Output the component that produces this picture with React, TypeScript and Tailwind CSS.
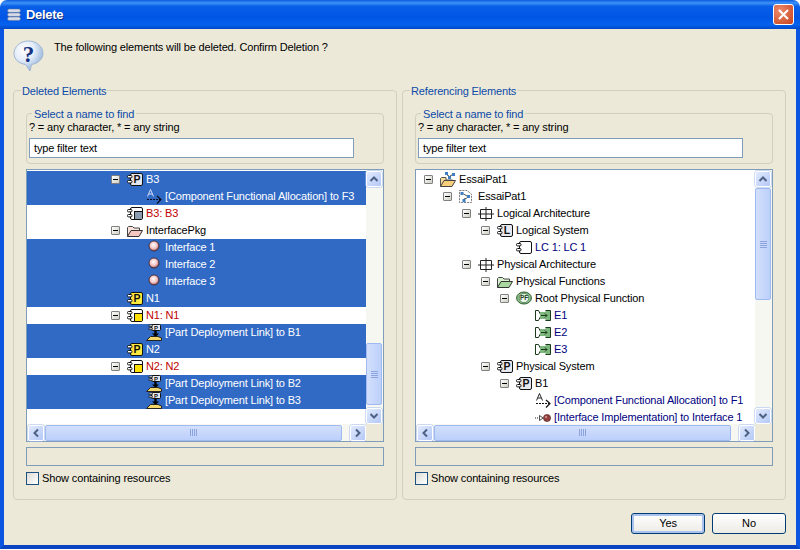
import React from "react";

type Row = {
  level: number;
  text: string;
  icon: React.ReactNode;
  exp?: boolean;
  sel?: boolean;
  color?: string;
};

const svgText = { fontFamily: "Liberation Sans, sans-serif" };

function Expander() {
  return (
    <div className="flex h-[9px] w-[9px] items-center justify-center rounded-[1px] border border-[#808080] bg-[linear-gradient(135deg,#ffffff,#cfcfc4)]">
      <div className="h-px w-[5px] bg-black" />
    </div>
  );
}

function Comp({ letter, fill = "#fff", corner }: { letter?: string; fill?: string; corner?: string }) {
  return (
    <svg width="16" height="16" viewBox="0 0 16 16">
      <rect x="3.5" y="1.5" width="12" height="12" rx="1.5" fill={fill} stroke="#111" />
      {corner && <rect x="8" y="6" width="7" height="7" fill={corner} />}
      {corner && <path d="M7 5.5H15M7.5 5.5V13" stroke="#111" />}
      <rect x="0.5" y="3.5" width="4.5" height="2.4" rx="1" fill="#fff" stroke="#111" />
      <rect x="0.5" y="8.5" width="4.5" height="2.4" rx="1" fill="#fff" stroke="#111" />
      {letter && (
        <text x="10" y="11.4" fontSize="10.5" fontWeight="bold" textAnchor="middle" fill="#111" style={svgText}>
          {letter}
        </text>
      )}
    </svg>
  );
}

function Folder({ fill, tab }: { fill: string; tab: string }) {
  return (
    <svg width="16" height="16" viewBox="0 0 16 16">
      <path d="M0.5 13.5V4.5L1.5 3.5H5.5L7 5H12.5V7" fill={tab} stroke="#444" />
      <path d="M0.5 13.5L4 7.5H15.5L12 13.5Z" fill={fill} stroke="#333" />
    </svg>
  );
}

function ProjectFolder() {
  return (
    <svg width="16" height="16" viewBox="0 0 16 16">
      <path d="M0.5 14.5V6.5L1.5 5.5H6V8H12.5" fill="#f7dc9c" stroke="#555" />
      <path d="M0.5 14.5L4 8.5H15.5L12 14.5Z" fill="#f5cf7a" stroke="#444" />
      <rect x="5" y="0" width="3" height="3" fill="#3d7fc4" />
      <rect x="12" y="1" width="3" height="3" fill="#3d7fc4" />
      <rect x="8" y="4" width="3" height="3" fill="#3d7fc4" />
      <path d="M7 3L9 4M10 4L12 3" stroke="#555" />
    </svg>
  );
}

function ModelFile() {
  return (
    <svg width="14" height="15" viewBox="0 0 14 15">
      <path d="M0.5 1.5H8L12.5 5V13.5H0.5Z" fill="#fff" stroke="#777" strokeDasharray="2 1" />
      <rect x="1.5" y="3" width="3" height="3" fill="#3d7fc4" />
      <rect x="8" y="6" width="3" height="3" fill="#3d7fc4" />
      <rect x="3.5" y="10" width="3" height="3" fill="#3d7fc4" />
      <path d="M4.5 5L8 7M5 10L8 9" stroke="#555" />
    </svg>
  );
}

function Arch() {
  return (
    <svg width="16" height="16" viewBox="0 0 16 16">
      <path d="M2.5 3.5H13.5V12.5H2.5ZM8 1V15M0 8H16" fill="none" stroke="#222" />
    </svg>
  );
}

function Sphere({ id }: { id: string }) {
  return (
    <svg width="16" height="16" viewBox="0 0 16 16">
      <defs>
        <radialGradient id={id} cx="0.45" cy="0.4" r="0.65">
          <stop offset="0" stopColor="#ffffff" />
          <stop offset="0.55" stopColor="#f0c2c4" />
          <stop offset="1" stopColor="#8a3a3c" />
        </radialGradient>
      </defs>
      <circle cx="8" cy="6" r="5" fill={`url(#${id})`} stroke="#3a2020" strokeWidth="0.8" />
    </svg>
  );
}

function Alloc({ dark }: { dark?: boolean }) {
  const c = dark ? "#0a0a20" : "#111";
  return (
    <svg width="16" height="16" viewBox="0 0 16 16" className="overflow-visible">
      <path d="M1.5 7.5L4.5 0.5L7.5 7.5M2.8 5H6.2" fill="none" stroke={dark ? "#e8e8ff" : c} strokeWidth="0.9" />
      <path d="M1 10.5H14" stroke={c} strokeDasharray="2 1" />
      <path d="M11 7L15 10.5L11 14.5" fill="none" stroke={c} strokeWidth="1.2" />
    </svg>
  );
}

function Deploy() {
  return (
    <svg width="16" height="16" viewBox="0 0 16 16" className="overflow-visible">
      <rect x="5.5" y="-0.5" width="9" height="6" rx="1" fill="#e6e8f0" stroke="#111" />
      <rect x="3" y="0" width="3.5" height="1.6" fill="#fff" stroke="#111" strokeWidth="0.7" />
      <rect x="3" y="3" width="3.5" height="1.6" fill="#fff" stroke="#111" strokeWidth="0.7" />
      <text x="10" y="5" fontSize="6" fontWeight="bold" textAnchor="middle" fill="#111" style={svgText}>P</text>
      <path d="M9.5 6V10" stroke="#000" strokeWidth="2.4" />
      <path d="M9.5 12L6 8.5H13Z" fill="#000" />
      <path d="M0.5 15.5L4.5 11.5H9L12 11.5L15.5 13V15.5Z" fill="#f2d86a" stroke="#222" />
    </svg>
  );
}

function PF() {
  return (
    <svg width="16" height="16" viewBox="0 0 16 16">
      <ellipse cx="8" cy="7" rx="7.4" ry="6" fill="#8fc38f" stroke="#2c5a2c" />
      <ellipse cx="8" cy="7" rx="4.8" ry="4.6" fill="#eaf5ea" stroke="#2c5a2c" strokeWidth="0.6" />
      <text x="8" y="9.4" fontSize="6.5" fontWeight="bold" textAnchor="middle" fill="#224422" style={svgText}>PF</text>
    </svg>
  );
}

function Exch() {
  return (
    <svg width="16" height="16" viewBox="0 0 16 16">
      <path d="M0.5 2.5H3.5L6 7.5L3.5 12.5H0.5Z" fill="#fff" stroke="#1c3a1c" />
      <rect x="5" y="4" width="7" height="7" fill="#7db77d" />
      <path d="M10.5 2.5H15.5V12.5H10.5" fill="#7db77d" stroke="#1c3a1c" />
      <path d="M6 7.5H12M10 5.5L12 7.5L10 9.5" fill="none" stroke="#1c3a1c" />
    </svg>
  );
}

function Impl() {
  return (
    <svg width="16" height="16" viewBox="0 0 16 16">
      <path d="M0 8H4" stroke="#222" strokeDasharray="1 1" />
      <path d="M4.5 5.5L8 8L4.5 10.5Z" fill="#fff" stroke="#222" strokeWidth="0.8" />
      <circle cx="12" cy="8" r="3.6" fill="#94403f" stroke="#4a2020" strokeWidth="0.6" />
      <circle cx="11" cy="7" r="1" fill="#d8a0a0" />
    </svg>
  );
}

const leftRows: Row[] = [
  { level: 4, text: "B3", exp: true, sel: true, icon: <Comp letter="P" fill="#e6e8f0" /> },
  { level: 5, text: "[Component Functional Allocation] to F3", sel: true, icon: <Alloc dark /> },
  { level: 4, text: "B3: B3", color: "text-[#c00000]", icon: <Comp fill="#fff" corner="#8c9cb0" /> },
  { level: 4, text: "InterfacePkg", exp: true, icon: <Folder fill="#f4c8c0" tab="#fbe4dc" /> },
  { level: 5, text: "Interface 1", sel: true, icon: <Sphere id="s1" /> },
  { level: 5, text: "Interface 2", sel: true, icon: <Sphere id="s2" /> },
  { level: 5, text: "Interface 3", sel: true, icon: <Sphere id="s3" /> },
  { level: 4, text: "N1", sel: true, icon: <Comp letter="P" fill="#ffe93c" /> },
  { level: 4, text: "N1: N1", exp: true, color: "text-[#c00000]", icon: <Comp fill="#fff" corner="#ffe000" /> },
  { level: 5, text: "[Part Deployment Link] to B1", sel: true, icon: <Deploy /> },
  { level: 4, text: "N2", sel: true, icon: <Comp letter="P" fill="#ffe93c" /> },
  { level: 4, text: "N2: N2", exp: true, color: "text-[#c00000]", icon: <Comp fill="#fff" corner="#ffe000" /> },
  { level: 5, text: "[Part Deployment Link] to B2", sel: true, icon: <Deploy /> },
  { level: 5, text: "[Part Deployment Link] to B3", sel: true, icon: <Deploy /> },
];

const blue = "text-[#000080]";

const rightRows: Row[] = [
  { level: 0, text: "EssaiPat1", exp: true, icon: <ProjectFolder /> },
  { level: 1, text: "EssaiPat1", exp: true, icon: <ModelFile /> },
  { level: 2, text: "Logical Architecture", exp: true, icon: <Arch /> },
  { level: 3, text: "Logical System", exp: true, icon: <Comp letter="L" fill="#e6e8f0" /> },
  { level: 4, text: "LC 1: LC 1", color: blue, icon: <Comp /> },
  { level: 2, text: "Physical Architecture", exp: true, icon: <Arch /> },
  { level: 3, text: "Physical Functions", exp: true, icon: <Folder fill="#a8d8a0" tab="#d8f0d0" /> },
  { level: 4, text: "Root Physical Function", exp: true, icon: <PF /> },
  { level: 5, text: "E1", color: blue, icon: <Exch /> },
  { level: 5, text: "E2", color: blue, icon: <Exch /> },
  { level: 5, text: "E3", color: blue, icon: <Exch /> },
  { level: 3, text: "Physical System", exp: true, icon: <Comp letter="P" fill="#e6e8f0" /> },
  { level: 4, text: "B1", exp: true, icon: <Comp letter="P" fill="#e6e8f0" /> },
  { level: 5, text: "[Component Functional Allocation] to F1", color: blue, icon: <Alloc /> },
  { level: 5, text: "[Interface Implementation] to Interface 1", color: blue, icon: <Impl /> },
];

function Arrow({ dir }: { dir: "up" | "down" | "left" | "right" }) {
  const d = {
    up: "M2.5 8L6 4.5L9.5 8",
    down: "M2.5 4L6 7.5L9.5 4",
    left: "M8 2.5L4.5 6L8 9.5",
    right: "M4 2.5L7.5 6L4 9.5",
  }[dir];
  return (
    <div className="flex h-[16px] w-[16px] shrink-0 items-center justify-center rounded-[2px] border border-white bg-[linear-gradient(135deg,#e1eafe,#b4c8f6)] shadow-[0_0_0_0.5px_#9ebaf0]">
      <svg width="12" height="12" viewBox="0 0 12 12">
        <path d={d} fill="none" stroke="#4d6185" strokeWidth="2" />
      </svg>
    </div>
  );
}

function VScroll({ before, thumb }: { before: number; thumb: number }) {
  return (
    <div className="flex w-[17px] shrink-0 flex-col bg-[#f7f7f2] pt-px">
      <Arrow dir="up" />
      <div className="flex-1">
        <div style={{ height: before }} />
        <div
          className="flex w-[16px] items-center justify-center rounded-[2px] border border-[#9ebaf0] bg-[linear-gradient(to_right,#d3dffc,#bcd0fa)]"
          style={{ height: thumb }}
        >
          <div className="flex flex-col gap-px">
            {[0, 1, 2, 3].map((i) => (
              <div key={i} className="h-px w-[7px] bg-[#8ba4de]" />
            ))}
          </div>
        </div>
      </div>
      <Arrow dir="down" />
    </div>
  );
}

function HScroll() {
  return (
    <div className="flex h-[17px] shrink-0 bg-[#f7f7f2]">
      <div className="flex w-[339px] items-center pl-px">
        <Arrow dir="left" />
        <div className="mx-px flex h-[16px] w-[297px] items-center justify-center rounded-[2px] border border-[#9ebaf0] bg-[linear-gradient(to_bottom,#d3dffc,#bcd0fa)]">
          <div className="flex gap-px">
            {[0, 1, 2, 3].map((i) => (
              <div key={i} className="h-[7px] w-px bg-[#8ba4de]" />
            ))}
          </div>
        </div>
        <div className="flex-1" />
        <Arrow dir="right" />
      </div>
      <div className="flex-1 bg-[#ece9d8]" />
    </div>
  );
}

function TreeRow({ row }: { row: Row }) {
  return (
    <div
      className={`flex h-[17px] shrink-0 items-center overflow-hidden whitespace-nowrap ${row.sel ? "bg-[#316ac5] text-white" : row.color ?? "text-black"}`}
      style={{ paddingLeft: 8 + row.level * 19 }}
    >
      <div className="flex w-[16px] shrink-0 items-center">{row.exp && <Expander />}</div>
      <div className="flex h-[16px] w-[19px] shrink-0 items-center">{row.icon}</div>
      <span>{row.text}</span>
    </div>
  );
}

function Panel({ title, rows, before, thumb }: { title: string; rows: Row[]; before: number; thumb: number }) {
  return (
    <fieldset className="min-w-0 w-[384px] rounded-[4px] border border-[#d0d0bf] px-[12px] pb-[14px]">
      <legend className="ml-[-5px] h-[15px] px-px leading-[17px] text-[#0b4aa8]">{title}</legend>
      <fieldset className="mt-[9px] h-[57px] rounded-[4px] border border-[#d0d0bf] px-[2px]">
        <legend className="ml-[3px] h-[13px] px-[2px] leading-[15px] text-[#0b4aa8]">Select a name to find</legend>
        <div className="h-[14px] leading-[14px] text-black">? = any character, * = any string</div>
        <div className="mt-[4px] h-[20px] w-[325px] border border-[#7f9db9] bg-white px-[4px] leading-[18px] text-black">
          type filter text
        </div>
      </fieldset>
      <div className="mt-[5px] flex h-[273px] flex-col border border-[#7f9db9] bg-white">
        <div className="flex min-h-0 flex-1">
          <div className="flex w-[339px] flex-col overflow-hidden pt-px">
            {rows.map((row, i) => (
              <TreeRow key={i} row={row} />
            ))}
          </div>
          <VScroll before={before} thumb={thumb} />
        </div>
        <HScroll />
      </div>
      <div className="mt-[5px] h-[19px] border border-[#7f9db9]" />
      <div className="mt-[6px] flex h-[13px] items-center gap-[3px]">
        <div className="h-[13px] w-[13px] border border-[#1c5180] bg-[linear-gradient(135deg,#dcdcd7,#ffffff)]" />
        <span className="text-black">Show containing resources</span>
      </div>
    </fieldset>
  );
}

export default function App() {
  return (
    <div className="flex h-[549px] w-[800px] flex-col overflow-hidden rounded-t-[7px] bg-white font-['Liberation_Sans',sans-serif] text-[11px] tracking-[-0.15px]">
      {/* Title bar */}
      <div className="flex h-[29px] shrink-0 items-center justify-between bg-[linear-gradient(to_bottom,#0a5be0_0%,#3d92f7_10%,#0a5fe8_22%,#0055e5_60%,#0562ee_85%,#0048c8_100%)] pl-[7px] pr-[6px]">
        <div className="flex items-center gap-[5px]">
          <svg width="14" height="14" viewBox="0 0 14 14">
            {[1, 5, 9].map((y) => (
              <rect key={y} x="0.5" y={y} width="13" height="3.4" rx="1.7" fill="#d6dce8" stroke="#5a6c90" strokeWidth="0.5" />
            ))}
          </svg>
          <span className="text-[13px] font-bold tracking-[-0.3px] text-white [text-shadow:1px_1px_#0a2a80]">Delete</span>
        </div>
        <div className="flex h-[21px] w-[21px] items-center justify-center rounded-[3px] border border-white bg-[radial-gradient(circle_at_30%_30%,#ec8a6c,#c8421c)]">
          <svg width="13" height="13" viewBox="0 0 13 13">
            <path d="M2 2L11 11M11 2L2 11" stroke="#fff" strokeWidth="2" />
          </svg>
        </div>
      </div>

      {/* Dialog body */}
      <div className="flex min-h-0 flex-1 flex-col border-x-4 border-b-4 border-x-[#0b55e0] border-b-[#0a44c0] bg-[#ece9d8] pl-[9px] pr-[10px]">
        <div className="flex h-[54px] shrink-0 pt-[11px]">
          <svg width="32" height="32" viewBox="0 0 32 32">
            <defs>
              <radialGradient id="bubble" cx="0.35" cy="0.3" r="0.8">
                <stop offset="0" stopColor="#ffffff" />
                <stop offset="0.45" stopColor="#e2ecf8" />
                <stop offset="0.85" stopColor="#9db8dc" />
                <stop offset="1" stopColor="#7a98c4" />
              </radialGradient>
            </defs>
            <path
              d="M15.5 1C7.5 1 1 6.5 1 13.5C1 19 5.5 23.5 12.5 24.5L17 31L18.5 24.5C25 23.5 30 19 30 13.5C30 6.5 23.5 1 15.5 1Z"
              fill="url(#bubble)"
              stroke="#9fb6d4"
            />
            <text x="15.5" y="21.5" fontSize="23" fontWeight="bold" textAnchor="middle" fill="#16327f" style={{ fontFamily: "Liberation Serif, serif" }}>
              ?
            </text>
          </svg>
          <span className="ml-[9px] mt-[-1px] text-black">The following elements will be deleted. Confirm Deletion ?</span>
        </div>

        <div className="flex justify-between">
          <Panel title="Deleted Elements" rows={leftRows} before={156} thumb={62} />
          <Panel title="Referencing Elements" rows={rightRows} before={1} thumb={112} />
        </div>

        <div className="mt-[13px] flex justify-end gap-[7px]">
          <button className="h-[21px] w-[74px] rounded-[3px] border border-[#003c74] bg-[linear-gradient(to_bottom,#ffffff,#ecebe5)] text-black shadow-[inset_0_0_0_2px_#a9c3ee]">
            Yes
          </button>
          <button className="h-[21px] w-[74px] rounded-[3px] border border-[#003c74] bg-[linear-gradient(to_bottom,#ffffff,#ecebe5)] text-black">
            No
          </button>
        </div>
      </div>
    </div>
  );
}
